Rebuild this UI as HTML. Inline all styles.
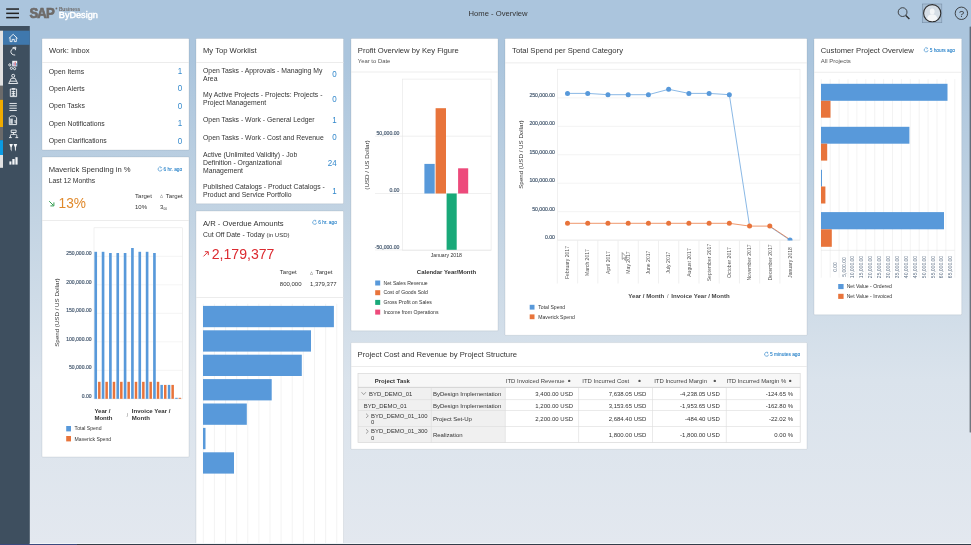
<!DOCTYPE html>
<html><head><meta charset="utf-8"><title>Home - Overview</title>
<style>
*{margin:0;padding:0}
html,body{width:971px;height:545px;overflow:hidden}
body{font-family:"Liberation Sans",sans-serif;background:linear-gradient(to bottom,#abc5dd 0px,#abc5dd 60px,#c3d4e3 220px,#dae3ec 380px,#e3e8ef 545px)}
svg{position:absolute;left:0;top:0;will-change:transform;font-family:"Liberation Sans",sans-serif}
</style></head><body>
<svg width="971" height="545" viewBox="0 0 971 545">
<rect x="6.20" y="8.30" width="12.80" height="1.50" fill="#222"/>
<rect x="6.20" y="12.60" width="12.80" height="1.50" fill="#222"/>
<rect x="6.20" y="16.85" width="12.80" height="1.50" fill="#222"/>
<text x="0" y="0" font-size="14.6" font-weight="bold" fill="#6e6b69" stroke="#6e6b69" stroke-width="0.75" transform="translate(29.4,18.1) scale(0.9,1)" letter-spacing="-0.9">SAP</text>
<circle cx="56.4" cy="8.5" r="0.9" fill="#6e6b69"/>
<text x="58.90" y="10.90" font-size="4.9" fill="#6e6b69" font-weight="bold" letter-spacing="-0.05">Business</text>
<text x="58.80" y="18.20" font-size="9.15" fill="#ffffff" stroke="#fff" stroke-width="0.42">ByDesign</text>
<text x="468.60" y="16.10" font-size="7.65" fill="#333">Home - Overview</text>
<rect x="0.00" y="26.00" width="29.80" height="519.00" fill="#3e4f5f"/>
<rect x="3.00" y="30.70" width="26.80" height="14.10" fill="#3f78ad"/>
<rect x="0.00" y="30.70" width="3.00" height="55.10" fill="#e2e2e2"/>
<rect x="0.00" y="85.80" width="3.00" height="14.00" fill="#6b6b6b"/>
<rect x="0.00" y="99.80" width="3.00" height="27.20" fill="#f0ab00"/>
<rect x="0.00" y="127.00" width="3.00" height="13.20" fill="#6b6b6b"/>
<rect x="0.00" y="140.20" width="3.00" height="14.80" fill="#0b9be3"/>
<rect x="0.00" y="155.00" width="3.00" height="12.80" fill="#e2e2e2"/>
<rect x="969.60" y="26.50" width="1.40" height="406.00" fill="rgba(45,52,62,0.62)" rx="0.5"/>
<rect x="42.00" y="38.50" width="147.00" height="111.50" fill="#fff" rx="0.7" stroke="rgba(60,80,100,0.14)" stroke-width="0.8"/>
<rect x="42.00" y="157.00" width="147.00" height="300.00" fill="#fff" rx="0.7" stroke="rgba(60,80,100,0.14)" stroke-width="0.8"/>
<rect x="196.00" y="38.50" width="147.50" height="165.20" fill="#fff" rx="0.7" stroke="rgba(60,80,100,0.14)" stroke-width="0.8"/>
<rect x="196.00" y="211.00" width="147.50" height="340.00" fill="#fff" rx="0.7" stroke="rgba(60,80,100,0.14)" stroke-width="0.8"/>
<rect x="351.00" y="38.50" width="147.00" height="292.30" fill="#fff" rx="0.7" stroke="rgba(60,80,100,0.14)" stroke-width="0.8"/>
<rect x="505.00" y="38.50" width="302.00" height="296.80" fill="#fff" rx="0.7" stroke="rgba(60,80,100,0.14)" stroke-width="0.8"/>
<rect x="814.00" y="38.50" width="147.70" height="276.30" fill="#fff" rx="0.7" stroke="rgba(60,80,100,0.14)" stroke-width="0.8"/>
<rect x="351.00" y="342.60" width="456.00" height="106.70" fill="#fff" rx="0.7" stroke="rgba(60,80,100,0.14)" stroke-width="0.8"/>
<text x="49.00" y="53.30" font-size="7.65" fill="#333">Work: Inbox</text>
<rect x="42.00" y="62.00" width="147.00" height="0.80" fill="#e8e8e8"/>
<text x="48.80" y="73.50" font-size="6.85" fill="#333">Open Items</text>
<text x="0" y="0" font-size="8.0" fill="#3489cc" text-anchor="end" transform="translate(182.20,73.90) scale(1,1.22)">1</text>
<text x="48.80" y="91.00" font-size="6.85" fill="#333">Open Alerts</text>
<text x="0" y="0" font-size="8.0" fill="#3489cc" text-anchor="end" transform="translate(182.20,91.40) scale(1,1.22)">0</text>
<text x="48.80" y="108.40" font-size="6.85" fill="#333">Open Tasks</text>
<text x="0" y="0" font-size="8.0" fill="#3489cc" text-anchor="end" transform="translate(182.20,108.80) scale(1,1.22)">0</text>
<text x="48.80" y="125.80" font-size="6.85" fill="#333">Open Notifications</text>
<text x="0" y="0" font-size="8.0" fill="#3489cc" text-anchor="end" transform="translate(182.20,126.20) scale(1,1.22)">1</text>
<text x="48.80" y="143.20" font-size="6.85" fill="#333">Open Clarifications</text>
<text x="0" y="0" font-size="8.0" fill="#3489cc" text-anchor="end" transform="translate(182.20,143.60) scale(1,1.22)">0</text>
<text x="48.70" y="172.00" font-size="7.65" fill="#333">Maverick Spending in %</text>
<text x="48.70" y="183.00" font-size="6.8" fill="#333">Last 12 Months</text>
<text x="182.20" y="170.93" font-size="4.8" fill="#3489cc" text-anchor="end" stroke="#3489cc" stroke-width="0.12">6 hr. ago</text>
<path d="M161.22,167.45 A2,2 0 1 0 162.02,169.40" fill="none" stroke="#3489cc" stroke-width="0.65"/>
<path d="M160.52,166.70 L161.62,167.60 L160.62,168.50" fill="none" stroke="#3489cc" stroke-width="0.5"/>
<path d="M49.2,201.2 L53.4,205.4 M53.9,202.4 L53.9,205.9 L50.4,205.9" stroke="#2b9a4a" stroke-width="0.95" fill="none"/>
<text x="0" y="0" font-size="13.7" fill="#e0892b" text-anchor="start" transform="translate(58.60,207.90) scale(1,1.12)">13%</text>
<text x="135.00" y="197.80" font-size="6.1" fill="#333">Target</text>
<text x="159.80" y="197.30" font-size="3.6" fill="#333">△</text>
<text x="165.80" y="197.80" font-size="6.1" fill="#333">Target</text>
<text x="135.00" y="209.10" font-size="6.0" fill="#333">10%</text>
<text x="160.00" y="209.10" font-size="6.0" fill="#333">3</text>
<text x="163.40" y="209.80" font-size="3.2" fill="#333">00</text>
<rect x="42.00" y="220.00" width="147.00" height="0.80" fill="#e8e8e8"/>
<rect x="94.00" y="227.80" width="88.40" height="171.00" fill="none" stroke="#e6e6e6" stroke-width="0.6"/>
<line x1="94.00" y1="398.80" x2="182.40" y2="398.80" stroke="#ececec" stroke-width="0.6"/>
<line x1="94.00" y1="370.30" x2="182.40" y2="370.30" stroke="#ececec" stroke-width="0.6"/>
<line x1="94.00" y1="341.80" x2="182.40" y2="341.80" stroke="#ececec" stroke-width="0.6"/>
<line x1="94.00" y1="313.30" x2="182.40" y2="313.30" stroke="#ececec" stroke-width="0.6"/>
<line x1="94.00" y1="284.80" x2="182.40" y2="284.80" stroke="#ececec" stroke-width="0.6"/>
<line x1="94.00" y1="256.30" x2="182.40" y2="256.30" stroke="#ececec" stroke-width="0.6"/>
<text x="91.50" y="397.64" font-size="5.05" fill="#44586f" text-anchor="end" stroke="#44586f" stroke-width="0.18">0.00</text>
<text x="91.50" y="369.14" font-size="5.05" fill="#44586f" text-anchor="end" stroke="#44586f" stroke-width="0.18">50,000.00</text>
<text x="91.50" y="340.64" font-size="5.05" fill="#44586f" text-anchor="end" stroke="#44586f" stroke-width="0.18">100,000.00</text>
<text x="91.50" y="312.14" font-size="5.05" fill="#44586f" text-anchor="end" stroke="#44586f" stroke-width="0.18">150,000.00</text>
<text x="91.50" y="283.64" font-size="5.05" fill="#44586f" text-anchor="end" stroke="#44586f" stroke-width="0.18">200,000.00</text>
<text x="91.50" y="255.14" font-size="5.05" fill="#44586f" text-anchor="end" stroke="#44586f" stroke-width="0.18">250,000.00</text>
<text x="0" y="0" font-size="6.2" fill="#333" text-anchor="middle" transform="translate(56.40,312.60) rotate(-90) translate(0,2.13)">Spend (USD / US Dollar)</text>
<rect x="94.40" y="251.80" width="2.65" height="147.00" fill="#5899da"/>
<rect x="98.05" y="381.80" width="2.50" height="17.00" fill="#e8743b"/>
<rect x="101.74" y="251.80" width="2.65" height="147.00" fill="#5899da"/>
<rect x="105.39" y="381.80" width="2.50" height="17.00" fill="#e8743b"/>
<rect x="109.08" y="253.00" width="2.65" height="145.80" fill="#5899da"/>
<rect x="112.73" y="381.80" width="2.50" height="17.00" fill="#e8743b"/>
<rect x="116.42" y="253.00" width="2.65" height="145.80" fill="#5899da"/>
<rect x="120.07" y="381.80" width="2.50" height="17.00" fill="#e8743b"/>
<rect x="123.76" y="253.00" width="2.65" height="145.80" fill="#5899da"/>
<rect x="127.41" y="381.80" width="2.50" height="17.00" fill="#e8743b"/>
<rect x="131.10" y="248.00" width="2.65" height="150.80" fill="#5899da"/>
<rect x="134.75" y="381.80" width="2.50" height="17.00" fill="#e8743b"/>
<rect x="138.44" y="251.80" width="2.65" height="147.00" fill="#5899da"/>
<rect x="142.09" y="381.80" width="2.50" height="17.00" fill="#e8743b"/>
<rect x="145.78" y="251.80" width="2.65" height="147.00" fill="#5899da"/>
<rect x="149.43" y="381.80" width="2.50" height="17.00" fill="#e8743b"/>
<rect x="153.12" y="253.00" width="2.65" height="145.80" fill="#5899da"/>
<rect x="156.77" y="381.80" width="2.50" height="17.00" fill="#e8743b"/>
<rect x="160.40" y="384.90" width="2.50" height="13.90" fill="#5899da"/>
<rect x="164.00" y="384.90" width="2.50" height="13.90" fill="#e8743b"/>
<rect x="167.80" y="384.90" width="2.50" height="13.90" fill="#5899da"/>
<rect x="171.40" y="384.90" width="2.50" height="13.90" fill="#e8743b"/>
<rect x="175.20" y="397.80" width="2.50" height="1.00" fill="#5899da"/>
<rect x="178.60" y="397.80" width="2.50" height="1.00" fill="#e8743b"/>
<text x="94.40" y="412.70" font-size="6.05" fill="#333" font-weight="bold">Year /</text>
<text x="94.40" y="419.50" font-size="6.05" fill="#333" font-weight="bold">Month</text>
<text x="126.80" y="417.00" font-size="4.5" fill="#555">/</text>
<text x="131.80" y="412.70" font-size="6.05" fill="#333" font-weight="bold">Invoice Year /</text>
<text x="131.80" y="419.50" font-size="6.05" fill="#333" font-weight="bold">Month</text>
<rect x="66.20" y="426.00" width="4.80" height="5.40" fill="#5899da"/>
<text x="74.60" y="430.45" font-size="5.1" fill="#333">Total Spend</text>
<rect x="66.20" y="436.00" width="4.80" height="5.40" fill="#e8743b"/>
<text x="74.60" y="440.65" font-size="5.1" fill="#333">Maverick Spend</text>
<text x="203.00" y="53.30" font-size="7.65" fill="#333">My Top Worklist</text>
<rect x="196.00" y="62.00" width="147.50" height="0.80" fill="#e8e8e8"/>
<text x="203.00" y="72.70" font-size="6.85" fill="#333">Open Tasks - Approvals - Managing My</text>
<text x="203.00" y="80.55" font-size="6.85" fill="#333">Area</text>
<text x="0" y="0" font-size="8.0" fill="#3489cc" text-anchor="end" transform="translate(336.60,77.45) scale(1,1.22)">0</text>
<text x="203.00" y="97.40" font-size="6.85" fill="#333">My Active Projects - Projects: Projects -</text>
<text x="203.00" y="105.25" font-size="6.85" fill="#333">Project Management</text>
<text x="0" y="0" font-size="8.0" fill="#3489cc" text-anchor="end" transform="translate(336.60,101.65) scale(1,1.22)">0</text>
<text x="203.00" y="122.10" font-size="6.85" fill="#333">Open Tasks - Work - General Ledger</text>
<text x="0" y="0" font-size="8.0" fill="#3489cc" text-anchor="end" transform="translate(336.60,122.85) scale(1,1.22)">1</text>
<text x="203.00" y="139.90" font-size="6.85" fill="#333">Open Tasks - Work - Cost and Revenue</text>
<text x="0" y="0" font-size="8.0" fill="#3489cc" text-anchor="end" transform="translate(336.60,140.45) scale(1,1.22)">0</text>
<text x="203.00" y="157.00" font-size="6.85" fill="#333">Active (Unlimited Validity) - Job</text>
<text x="203.00" y="164.85" font-size="6.85" fill="#333">Definition - Organizational</text>
<text x="203.00" y="172.70" font-size="6.85" fill="#333">Management</text>
<text x="0" y="0" font-size="8.0" fill="#3489cc" text-anchor="end" transform="translate(336.60,165.95) scale(1,1.22)">24</text>
<text x="203.00" y="189.30" font-size="6.85" fill="#333">Published Catalogs - Product Catalogs -</text>
<text x="203.00" y="197.15" font-size="6.85" fill="#333">Product and Service Portfolio</text>
<text x="0" y="0" font-size="8.0" fill="#3489cc" text-anchor="end" transform="translate(336.60,194.05) scale(1,1.22)">1</text>
<text x="203.00" y="225.60" font-size="7.65" fill="#333">A/R - Overdue Amounts</text>
<text x="336.80" y="224.23" font-size="4.8" fill="#3489cc" text-anchor="end" stroke="#3489cc" stroke-width="0.12">6 hr. ago</text>
<path d="M315.82,220.75 A2,2 0 1 0 316.62,222.70" fill="none" stroke="#3489cc" stroke-width="0.65"/>
<path d="M315.12,220.00 L316.22,220.90 L315.22,221.80" fill="none" stroke="#3489cc" stroke-width="0.5"/>
<text x="203.00" y="237.20" font-size="6.8" fill="#333">Cut Off Date - Today</text>
<text x="266.50" y="237.20" font-size="6.0" fill="#333">(in USD)</text>
<path d="M203.5,256.4 L207.9,252 M204.9,251.7 L208.3,251.7 L208.3,255.1" stroke="#dc2a30" stroke-width="0.95" fill="none"/>
<text x="0" y="0" font-size="14.1" fill="#dc2a30" text-anchor="start" transform="translate(211.70,258.50) scale(1,1.07)">2,179,377</text>
<text x="279.80" y="274.20" font-size="6.1" fill="#333">Target</text>
<text x="310.30" y="273.70" font-size="3.6" fill="#333">△</text>
<text x="315.60" y="274.20" font-size="6.1" fill="#333">Target</text>
<text x="279.80" y="286.00" font-size="6.0" fill="#333">800,000</text>
<text x="336.60" y="286.00" font-size="6.0" fill="#333" text-anchor="end">1,379,377</text>
<rect x="196.00" y="297.00" width="147.50" height="0.80" fill="#e8e8e8"/>
<line x1="203.30" y1="303.80" x2="203.30" y2="545.00" stroke="#ebebeb" stroke-width="0.6"/>
<line x1="214.42" y1="303.80" x2="214.42" y2="545.00" stroke="#ebebeb" stroke-width="0.6"/>
<line x1="225.54" y1="303.80" x2="225.54" y2="545.00" stroke="#ebebeb" stroke-width="0.6"/>
<line x1="236.66" y1="303.80" x2="236.66" y2="545.00" stroke="#ebebeb" stroke-width="0.6"/>
<line x1="247.78" y1="303.80" x2="247.78" y2="545.00" stroke="#ebebeb" stroke-width="0.6"/>
<line x1="258.90" y1="303.80" x2="258.90" y2="545.00" stroke="#ebebeb" stroke-width="0.6"/>
<line x1="270.02" y1="303.80" x2="270.02" y2="545.00" stroke="#ebebeb" stroke-width="0.6"/>
<line x1="281.14" y1="303.80" x2="281.14" y2="545.00" stroke="#ebebeb" stroke-width="0.6"/>
<line x1="292.26" y1="303.80" x2="292.26" y2="545.00" stroke="#ebebeb" stroke-width="0.6"/>
<line x1="303.38" y1="303.80" x2="303.38" y2="545.00" stroke="#ebebeb" stroke-width="0.6"/>
<line x1="314.50" y1="303.80" x2="314.50" y2="545.00" stroke="#ebebeb" stroke-width="0.6"/>
<line x1="325.62" y1="303.80" x2="325.62" y2="545.00" stroke="#ebebeb" stroke-width="0.6"/>
<line x1="336.74" y1="303.80" x2="336.74" y2="545.00" stroke="#ebebeb" stroke-width="0.6"/>
<rect x="203.00" y="305.90" width="130.90" height="21.30" fill="#5899da"/>
<rect x="203.00" y="330.30" width="108.00" height="21.30" fill="#5899da"/>
<rect x="203.00" y="354.70" width="98.80" height="21.30" fill="#5899da"/>
<rect x="203.00" y="379.10" width="68.70" height="21.30" fill="#5899da"/>
<rect x="203.00" y="403.50" width="43.80" height="21.30" fill="#5899da"/>
<rect x="203.00" y="427.90" width="2.50" height="21.30" fill="#5899da"/>
<rect x="203.00" y="452.30" width="31.00" height="21.30" fill="#5899da"/>
<text x="357.80" y="52.60" font-size="7.65" fill="#333">Profit Overview by Key Figure</text>
<text x="357.80" y="63.40" font-size="5.9" fill="#555">Year to Date</text>
<rect x="351.00" y="71.60" width="147.00" height="0.80" fill="#e8e8e8"/>
<rect x="402.40" y="79.10" width="88.70" height="171.20" fill="none" stroke="#e6e6e6" stroke-width="0.6"/>
<line x1="375.00" y1="136.20" x2="491.10" y2="136.20" stroke="#e6e6e6" stroke-width="0.6"/>
<line x1="375.00" y1="193.50" x2="491.10" y2="193.50" stroke="#e6e6e6" stroke-width="0.6"/>
<line x1="375.00" y1="250.00" x2="491.10" y2="250.00" stroke="#e6e6e6" stroke-width="0.6"/>
<text x="399.40" y="134.77" font-size="5.15" fill="#44586f" text-anchor="end" stroke="#44586f" stroke-width="0.18">50,000.00</text>
<text x="399.40" y="191.97" font-size="5.15" fill="#44586f" text-anchor="end" stroke="#44586f" stroke-width="0.18">0.00</text>
<text x="399.40" y="248.97" font-size="5.15" fill="#44586f" text-anchor="end" stroke="#44586f" stroke-width="0.18">-50,000.00</text>
<text x="0" y="0" font-size="6.25" fill="#333" text-anchor="middle" transform="translate(366.40,165.00) rotate(-90) translate(0,2.15)">(USD / US Dollar)</text>
<rect x="424.40" y="163.90" width="10.30" height="29.60" fill="#5899da"/>
<rect x="435.60" y="108.20" width="10.40" height="85.30" fill="#e8743b"/>
<rect x="446.60" y="193.50" width="10.10" height="56.30" fill="#19a979"/>
<rect x="458.10" y="168.30" width="10.10" height="25.20" fill="#ed4a7b"/>
<text x="446.30" y="257.27" font-size="5.15" fill="#333" text-anchor="middle">January 2018</text>
<text x="446.50" y="273.95" font-size="5.97" fill="#333" font-weight="bold" text-anchor="middle">Calendar Year/Month</text>
<rect x="375.20" y="280.50" width="5.00" height="5.00" fill="#5899da"/>
<text x="383.50" y="284.77" font-size="5.14" fill="#333">Net Sales Revenue</text>
<rect x="375.20" y="290.20" width="5.00" height="5.00" fill="#e8743b"/>
<text x="383.50" y="294.47" font-size="5.14" fill="#333">Cost of Goods Sold</text>
<rect x="375.20" y="299.90" width="5.00" height="5.00" fill="#19a979"/>
<text x="383.50" y="304.17" font-size="5.14" fill="#333">Gross Profit on Sales</text>
<rect x="375.20" y="309.60" width="5.00" height="5.00" fill="#ed4a7b"/>
<text x="383.50" y="313.87" font-size="5.14" fill="#333">Income from Operations</text>
<text x="512.10" y="52.60" font-size="7.65" fill="#333">Total Spend per Spend Category</text>
<rect x="505.00" y="62.50" width="302.00" height="0.80" fill="#e8e8e8"/>
<rect x="557.30" y="69.20" width="242.70" height="170.90" fill="none" stroke="#e6e6e6" stroke-width="0.6"/>
<line x1="557.30" y1="240.10" x2="800.00" y2="240.10" stroke="#ebebeb" stroke-width="0.6"/>
<text x="554.90" y="239.25" font-size="5.1" fill="#44586f" text-anchor="end" stroke="#44586f" stroke-width="0.18">0.00</text>
<line x1="557.30" y1="211.66" x2="800.00" y2="211.66" stroke="#ebebeb" stroke-width="0.6"/>
<text x="554.90" y="210.81" font-size="5.1" fill="#44586f" text-anchor="end" stroke="#44586f" stroke-width="0.18">50,000.00</text>
<line x1="557.30" y1="183.22" x2="800.00" y2="183.22" stroke="#ebebeb" stroke-width="0.6"/>
<text x="554.90" y="182.37" font-size="5.1" fill="#44586f" text-anchor="end" stroke="#44586f" stroke-width="0.18">100,000.00</text>
<line x1="557.30" y1="154.78" x2="800.00" y2="154.78" stroke="#ebebeb" stroke-width="0.6"/>
<text x="554.90" y="153.93" font-size="5.1" fill="#44586f" text-anchor="end" stroke="#44586f" stroke-width="0.18">150,000.00</text>
<line x1="557.30" y1="126.34" x2="800.00" y2="126.34" stroke="#ebebeb" stroke-width="0.6"/>
<text x="554.90" y="125.49" font-size="5.1" fill="#44586f" text-anchor="end" stroke="#44586f" stroke-width="0.18">200,000.00</text>
<line x1="557.30" y1="97.90" x2="800.00" y2="97.90" stroke="#ebebeb" stroke-width="0.6"/>
<text x="554.90" y="97.05" font-size="5.1" fill="#44586f" text-anchor="end" stroke="#44586f" stroke-width="0.18">250,000.00</text>
<text x="0" y="0" font-size="6.2" fill="#333" text-anchor="middle" transform="translate(520.50,154.60) rotate(-90) translate(0,2.13)">Spend (USD / US Dollar)</text>
<polyline points="567.50,93.40 587.73,93.40 607.96,94.70 628.19,94.70 648.42,94.70 668.65,89.30 688.88,93.40 709.11,93.40 729.34,94.70 749.57,226.10" fill="none" stroke="#5899da" stroke-width="0.7"/>
<line x1="769.80" y1="226.6" x2="790.03" y2="240.1" stroke="#5899da" stroke-width="0.7"/>
<polyline points="567.50,223.30 587.73,223.30 607.96,223.30 628.19,223.30 648.42,223.30 668.65,223.30 688.88,223.30 709.11,223.30 729.34,223.30 749.57,226.10 769.80,226.10 790.03,239.60" fill="none" stroke="#e8743b" stroke-width="0.75"/>
<circle cx="567.50" cy="93.40" r="2.5" fill="#5899da"/>
<circle cx="587.73" cy="93.40" r="2.5" fill="#5899da"/>
<circle cx="607.96" cy="94.70" r="2.5" fill="#5899da"/>
<circle cx="628.19" cy="94.70" r="2.5" fill="#5899da"/>
<circle cx="648.42" cy="94.70" r="2.5" fill="#5899da"/>
<circle cx="668.65" cy="89.30" r="2.5" fill="#5899da"/>
<circle cx="688.88" cy="93.40" r="2.5" fill="#5899da"/>
<circle cx="709.11" cy="93.40" r="2.5" fill="#5899da"/>
<circle cx="729.34" cy="94.70" r="2.5" fill="#5899da"/>
<circle cx="567.50" cy="223.30" r="2.5" fill="#e8743b"/>
<circle cx="587.73" cy="223.30" r="2.5" fill="#e8743b"/>
<circle cx="607.96" cy="223.30" r="2.5" fill="#e8743b"/>
<circle cx="628.19" cy="223.30" r="2.5" fill="#e8743b"/>
<circle cx="648.42" cy="223.30" r="2.5" fill="#e8743b"/>
<circle cx="668.65" cy="223.30" r="2.5" fill="#e8743b"/>
<circle cx="688.88" cy="223.30" r="2.5" fill="#e8743b"/>
<circle cx="709.11" cy="223.30" r="2.5" fill="#e8743b"/>
<circle cx="729.34" cy="223.30" r="2.5" fill="#e8743b"/>
<circle cx="749.57" cy="226.10" r="2.5" fill="#e8743b"/>
<circle cx="769.80" cy="226.10" r="2.5" fill="#e8743b"/>
<clipPath id="pc6"><rect x="557" y="60" width="250" height="180.4"/></clipPath>
<circle cx="790.03" cy="240.10" r="2.5" fill="#5899da" clip-path="url(#pc6)"/>
<text x="0" y="0" font-size="5.08" fill="#555" text-anchor="middle" transform="translate(567.50,262.50) rotate(-90) translate(0,1.75)">February 2017</text>
<text x="0" y="0" font-size="5.08" fill="#555" text-anchor="middle" transform="translate(587.73,262.50) rotate(-90) translate(0,1.75)">March 2017</text>
<line x1="577.62" y1="240.70" x2="577.62" y2="283.50" stroke="#e6e6e6" stroke-width="0.6"/>
<text x="0" y="0" font-size="5.08" fill="#555" text-anchor="middle" transform="translate(607.96,262.50) rotate(-90) translate(0,1.75)">April 2017</text>
<line x1="597.85" y1="240.70" x2="597.85" y2="283.50" stroke="#e6e6e6" stroke-width="0.6"/>
<text x="0" y="0" font-size="5.08" fill="#555" text-anchor="middle" transform="translate(628.19,262.50) rotate(-90) translate(0,1.75)">May 2017</text>
<line x1="618.08" y1="240.70" x2="618.08" y2="283.50" stroke="#e6e6e6" stroke-width="0.6"/>
<text x="0" y="0" font-size="5.08" fill="#555" text-anchor="middle" transform="translate(648.42,262.50) rotate(-90) translate(0,1.75)">June 2017</text>
<line x1="638.31" y1="240.70" x2="638.31" y2="283.50" stroke="#e6e6e6" stroke-width="0.6"/>
<text x="0" y="0" font-size="5.08" fill="#555" text-anchor="middle" transform="translate(668.65,262.50) rotate(-90) translate(0,1.75)">July 2017</text>
<line x1="658.53" y1="240.70" x2="658.53" y2="283.50" stroke="#e6e6e6" stroke-width="0.6"/>
<text x="0" y="0" font-size="5.08" fill="#555" text-anchor="middle" transform="translate(688.88,262.50) rotate(-90) translate(0,1.75)">August 2017</text>
<line x1="678.76" y1="240.70" x2="678.76" y2="283.50" stroke="#e6e6e6" stroke-width="0.6"/>
<text x="0" y="0" font-size="5.08" fill="#555" text-anchor="middle" transform="translate(709.11,262.50) rotate(-90) translate(0,1.75)">September 2017</text>
<line x1="699.00" y1="240.70" x2="699.00" y2="283.50" stroke="#e6e6e6" stroke-width="0.6"/>
<text x="0" y="0" font-size="5.08" fill="#555" text-anchor="middle" transform="translate(729.34,262.50) rotate(-90) translate(0,1.75)">October 2017</text>
<line x1="719.23" y1="240.70" x2="719.23" y2="283.50" stroke="#e6e6e6" stroke-width="0.6"/>
<text x="0" y="0" font-size="5.08" fill="#555" text-anchor="middle" transform="translate(749.57,262.50) rotate(-90) translate(0,1.75)">November 2017</text>
<line x1="739.45" y1="240.70" x2="739.45" y2="283.50" stroke="#e6e6e6" stroke-width="0.6"/>
<text x="0" y="0" font-size="5.08" fill="#555" text-anchor="middle" transform="translate(769.80,262.50) rotate(-90) translate(0,1.75)">December 2017</text>
<line x1="759.68" y1="240.70" x2="759.68" y2="283.50" stroke="#e6e6e6" stroke-width="0.6"/>
<text x="0" y="0" font-size="5.08" fill="#555" text-anchor="middle" transform="translate(790.03,262.50) rotate(-90) translate(0,1.75)">January 2018</text>
<line x1="779.91" y1="240.70" x2="779.91" y2="283.50" stroke="#e6e6e6" stroke-width="0.6"/>
<line x1="557.30" y1="240.40" x2="557.30" y2="283.50" stroke="#e6e6e6" stroke-width="0.6"/>
<text x="679" y="298.08" font-size="6.06" fill="#444" text-anchor="middle"><tspan font-weight="bold">Year / Month</tspan><tspan fill="#666" font-size="5.5"> / </tspan><tspan font-weight="bold">Invoice Year / Month</tspan></text>
<rect x="529.70" y="304.80" width="4.80" height="4.80" fill="#5899da"/>
<text x="538.30" y="308.95" font-size="5.1" fill="#333">Total Spend</text>
<rect x="529.70" y="314.40" width="4.80" height="4.80" fill="#e8743b"/>
<text x="538.30" y="318.55" font-size="5.1" fill="#333">Maverick Spend</text>
<path d="M622.2,252.6 L622.2,259.4 L623.8,257.9 L625,260.4 L626,259.9 L624.8,257.5 L626.8,257.4 Z" fill="#fff" stroke="#333" stroke-width="0.45"/>
<text x="820.80" y="52.60" font-size="7.65" fill="#333">Customer Project Overview</text>
<text x="955.00" y="51.73" font-size="4.8" fill="#3489cc" text-anchor="end" stroke="#3489cc" stroke-width="0.12">5 hours ago</text>
<path d="M927.35,48.25 A2,2 0 1 0 928.15,50.20" fill="none" stroke="#3489cc" stroke-width="0.65"/>
<path d="M926.65,47.50 L927.75,48.40 L926.75,49.30" fill="none" stroke="#3489cc" stroke-width="0.5"/>
<text x="820.80" y="63.40" font-size="6.0" fill="#555">All Projects</text>
<rect x="814.00" y="71.80" width="147.70" height="0.80" fill="#e8e8e8"/>
<line x1="821.30" y1="79.20" x2="821.30" y2="277.60" stroke="#ebebeb" stroke-width="0.6"/>
<line x1="830.20" y1="79.20" x2="830.20" y2="277.60" stroke="#ebebeb" stroke-width="0.6"/>
<line x1="839.10" y1="79.20" x2="839.10" y2="277.60" stroke="#ebebeb" stroke-width="0.6"/>
<line x1="848.00" y1="79.20" x2="848.00" y2="277.60" stroke="#ebebeb" stroke-width="0.6"/>
<line x1="856.90" y1="79.20" x2="856.90" y2="277.60" stroke="#ebebeb" stroke-width="0.6"/>
<line x1="865.80" y1="79.20" x2="865.80" y2="277.60" stroke="#ebebeb" stroke-width="0.6"/>
<line x1="874.70" y1="79.20" x2="874.70" y2="277.60" stroke="#ebebeb" stroke-width="0.6"/>
<line x1="883.60" y1="79.20" x2="883.60" y2="277.60" stroke="#ebebeb" stroke-width="0.6"/>
<line x1="892.50" y1="79.20" x2="892.50" y2="277.60" stroke="#ebebeb" stroke-width="0.6"/>
<line x1="901.40" y1="79.20" x2="901.40" y2="277.60" stroke="#ebebeb" stroke-width="0.6"/>
<line x1="910.30" y1="79.20" x2="910.30" y2="277.60" stroke="#ebebeb" stroke-width="0.6"/>
<line x1="919.20" y1="79.20" x2="919.20" y2="277.60" stroke="#ebebeb" stroke-width="0.6"/>
<line x1="928.10" y1="79.20" x2="928.10" y2="277.60" stroke="#ebebeb" stroke-width="0.6"/>
<line x1="937.00" y1="79.20" x2="937.00" y2="277.60" stroke="#ebebeb" stroke-width="0.6"/>
<line x1="945.90" y1="79.20" x2="945.90" y2="277.60" stroke="#ebebeb" stroke-width="0.6"/>
<line x1="954.80" y1="79.20" x2="954.80" y2="277.60" stroke="#ebebeb" stroke-width="0.6"/>
<rect x="821.00" y="83.80" width="126.50" height="17.00" fill="#5899da"/>
<rect x="821.00" y="100.80" width="9.50" height="16.90" fill="#e8743b"/>
<rect x="821.00" y="126.80" width="88.40" height="16.90" fill="#5899da"/>
<rect x="821.00" y="143.70" width="6.20" height="16.90" fill="#e8743b"/>
<rect x="821.00" y="169.80" width="1.00" height="16.90" fill="#5899da"/>
<rect x="821.00" y="186.50" width="4.40" height="17.00" fill="#e8743b"/>
<rect x="821.00" y="212.10" width="123.00" height="17.20" fill="#5899da"/>
<rect x="821.00" y="229.30" width="10.80" height="17.50" fill="#e8743b"/>
<line x1="821.00" y1="250.30" x2="954.50" y2="250.30" stroke="#e0e0e0" stroke-width="0.6"/>
<text x="0" y="0" font-size="5.0" fill="#5f7186" text-anchor="middle" transform="translate(834.90,267.00) rotate(-90) translate(0,1.72)">0.00</text>
<text x="0" y="0" font-size="5.0" fill="#5f7186" text-anchor="middle" transform="translate(843.80,267.00) rotate(-90) translate(0,1.72)">5,000.00</text>
<text x="0" y="0" font-size="5.0" fill="#5f7186" text-anchor="middle" transform="translate(852.70,267.00) rotate(-90) translate(0,1.72)">10,000.00</text>
<text x="0" y="0" font-size="5.0" fill="#5f7186" text-anchor="middle" transform="translate(861.60,267.00) rotate(-90) translate(0,1.72)">15,000.00</text>
<text x="0" y="0" font-size="5.0" fill="#5f7186" text-anchor="middle" transform="translate(870.50,267.00) rotate(-90) translate(0,1.72)">20,000.00</text>
<text x="0" y="0" font-size="5.0" fill="#5f7186" text-anchor="middle" transform="translate(879.40,267.00) rotate(-90) translate(0,1.72)">25,000.00</text>
<text x="0" y="0" font-size="5.0" fill="#5f7186" text-anchor="middle" transform="translate(888.30,267.00) rotate(-90) translate(0,1.72)">30,000.00</text>
<text x="0" y="0" font-size="5.0" fill="#5f7186" text-anchor="middle" transform="translate(897.20,267.00) rotate(-90) translate(0,1.72)">35,000.00</text>
<text x="0" y="0" font-size="5.0" fill="#5f7186" text-anchor="middle" transform="translate(906.10,267.00) rotate(-90) translate(0,1.72)">40,000.00</text>
<text x="0" y="0" font-size="5.0" fill="#5f7186" text-anchor="middle" transform="translate(915.00,267.00) rotate(-90) translate(0,1.72)">45,000.00</text>
<text x="0" y="0" font-size="5.0" fill="#5f7186" text-anchor="middle" transform="translate(923.90,267.00) rotate(-90) translate(0,1.72)">50,000.00</text>
<text x="0" y="0" font-size="5.0" fill="#5f7186" text-anchor="middle" transform="translate(932.80,267.00) rotate(-90) translate(0,1.72)">55,000.00</text>
<text x="0" y="0" font-size="5.0" fill="#5f7186" text-anchor="middle" transform="translate(941.70,267.00) rotate(-90) translate(0,1.72)">60,000.00</text>
<text x="0" y="0" font-size="5.0" fill="#5f7186" text-anchor="middle" transform="translate(950.60,267.00) rotate(-90) translate(0,1.72)">65,000.00</text>
<rect x="838.20" y="284.00" width="5.40" height="5.10" fill="#5899da"/>
<text x="846.70" y="288.35" font-size="5.1" fill="#333">Net Value - Ordered</text>
<rect x="838.20" y="293.80" width="5.40" height="5.10" fill="#e8743b"/>
<text x="846.70" y="298.05" font-size="5.1" fill="#333">Net Value - Invoiced</text>
<text x="357.60" y="357.30" font-size="7.7" fill="#333">Project Cost and Revenue by Project Structure</text>
<text x="800.20" y="356.13" font-size="4.8" fill="#3489cc" text-anchor="end" stroke="#3489cc" stroke-width="0.12">5 minutes ago</text>
<path d="M767.75,352.65 A2,2 0 1 0 768.55,354.60" fill="none" stroke="#3489cc" stroke-width="0.65"/>
<path d="M767.05,351.90 L768.15,352.80 L767.15,353.70" fill="none" stroke="#3489cc" stroke-width="0.5"/>
<rect x="351.00" y="366.20" width="456.00" height="0.80" fill="#e8e8e8"/>
<rect x="358.00" y="373.40" width="442.20" height="14.00" fill="#f7f7f7"/>
<rect x="358.00" y="387.40" width="147.30" height="55.10" fill="#f0f0f0"/>
<rect x="358.00" y="373.40" width="442.20" height="69.10" fill="none" stroke="#d8d8d8" stroke-width="0.7"/>
<line x1="358.00" y1="387.40" x2="800.20" y2="387.40" stroke="#cfcfcf" stroke-width="0.9"/>
<line x1="358.00" y1="399.60" x2="800.20" y2="399.60" stroke="#dcdcdc" stroke-width="0.6"/>
<line x1="358.00" y1="410.50" x2="800.20" y2="410.50" stroke="#dcdcdc" stroke-width="0.6"/>
<line x1="358.00" y1="426.50" x2="800.20" y2="426.50" stroke="#dcdcdc" stroke-width="0.6"/>
<line x1="431.30" y1="387.40" x2="431.30" y2="442.50" stroke="#dcdcdc" stroke-width="0.6"/>
<line x1="505.30" y1="387.40" x2="505.30" y2="442.50" stroke="#dcdcdc" stroke-width="0.6"/>
<line x1="578.60" y1="387.40" x2="578.60" y2="442.50" stroke="#dcdcdc" stroke-width="0.6"/>
<line x1="652.50" y1="387.40" x2="652.50" y2="442.50" stroke="#dcdcdc" stroke-width="0.6"/>
<line x1="726.30" y1="387.40" x2="726.30" y2="442.50" stroke="#dcdcdc" stroke-width="0.6"/>
<text x="374.80" y="382.96" font-size="5.98" fill="#333" font-weight="bold">Project Task</text>
<text x="505.80" y="382.95" font-size="5.95" fill="#444">ITD Invoiced Revenue</text>
<circle cx="569.20" cy="380.9" r="1.2" fill="#555"/>
<text x="582.30" y="382.95" font-size="5.95" fill="#444">ITD Incurred Cost</text>
<circle cx="639.50" cy="380.9" r="1.2" fill="#555"/>
<text x="654.20" y="382.95" font-size="5.95" fill="#444">ITD Incurred Margin</text>
<circle cx="714.80" cy="380.9" r="1.2" fill="#555"/>
<text x="726.50" y="382.95" font-size="5.95" fill="#444">ITD Incurred Margin %</text>
<circle cx="790.20" cy="380.9" r="1.2" fill="#555"/>
<path d="M361.5,392.2 L363.7,394.6 L365.9,392.2" fill="none" stroke="#666" stroke-width="0.6"/>
<text x="369.00" y="395.55" font-size="5.95" fill="#333">BYD_DEMO_01</text>
<text x="432.90" y="396.26" font-size="6.0" fill="#333">ByDesign Implementation</text>
<text x="363.70" y="407.65" font-size="5.95" fill="#333">BYD_DEMO_01</text>
<text x="432.90" y="407.66" font-size="6.0" fill="#333">ByDesign Implementation</text>
<path d="M366,413.60 L368.3,415.80 L366,418.00" fill="none" stroke="#666" stroke-width="0.6"/>
<text x="371.10" y="417.85" font-size="5.95" fill="#333">BYD_DEMO_01_100</text>
<text x="371.10" y="424.25" font-size="5.95" fill="#333">0</text>
<text x="432.90" y="421.36" font-size="6.0" fill="#333">Project Set-Up</text>
<path d="M366,429.20 L368.3,431.40 L366,433.60" fill="none" stroke="#666" stroke-width="0.6"/>
<text x="371.10" y="433.45" font-size="5.95" fill="#333">BYD_DEMO_01_300</text>
<text x="371.10" y="439.85" font-size="5.95" fill="#333">0</text>
<text x="432.90" y="436.96" font-size="6.0" fill="#333">Realization</text>
<text x="573.00" y="396.06" font-size="6.0" fill="#333" text-anchor="end">3,400.00 USD</text>
<text x="646.40" y="396.06" font-size="6.0" fill="#333" text-anchor="end">7,638.05 USD</text>
<text x="719.80" y="396.06" font-size="6.0" fill="#333" text-anchor="end">-4,238.05 USD</text>
<text x="793.00" y="396.06" font-size="6.0" fill="#333" text-anchor="end">-124.65 %</text>
<text x="573.00" y="407.66" font-size="6.0" fill="#333" text-anchor="end">1,200.00 USD</text>
<text x="646.40" y="407.66" font-size="6.0" fill="#333" text-anchor="end">3,153.65 USD</text>
<text x="719.80" y="407.66" font-size="6.0" fill="#333" text-anchor="end">-1,953.65 USD</text>
<text x="793.00" y="407.66" font-size="6.0" fill="#333" text-anchor="end">-162.80 %</text>
<text x="573.00" y="421.36" font-size="6.0" fill="#333" text-anchor="end">2,200.00 USD</text>
<text x="646.40" y="421.36" font-size="6.0" fill="#333" text-anchor="end">2,684.40 USD</text>
<text x="719.80" y="421.36" font-size="6.0" fill="#333" text-anchor="end">-484.40 USD</text>
<text x="793.00" y="421.36" font-size="6.0" fill="#333" text-anchor="end">-22.02 %</text>
<text x="646.40" y="437.26" font-size="6.0" fill="#333" text-anchor="end">1,800.00 USD</text>
<text x="719.80" y="437.26" font-size="6.0" fill="#333" text-anchor="end">-1,800.00 USD</text>
<text x="793.00" y="437.26" font-size="6.0" fill="#333" text-anchor="end">0.00 %</text>
<circle cx="902.6" cy="12.1" r="4.4" fill="none" stroke="#2d2d2d" stroke-width="0.85"/>
<line x1="905.8" y1="15.4" x2="909.4" y2="18.9" stroke="#2d2d2d" stroke-width="1.4"/>
<rect x="922.30" y="4.00" width="19.50" height="18.70" fill="#a5bcd2" stroke="#7890a8" stroke-width="0.6"/>
<circle cx="932.2" cy="13.2" r="8.6" fill="#d6dee6" stroke="#2e2e2e" stroke-width="1.1"/>
<clipPath id="avc"><circle cx="932.2" cy="13.2" r="8.0"/></clipPath>
<g clip-path="url(#avc)" fill="#f4f6f8"><ellipse cx="932.2" cy="11.6" rx="2.4" ry="3"/><path d="M927.2,24 L927.4,17.6 Q928,15.2 930.6,14.6 L933.8,14.6 Q936.4,15.2 937,17.6 L937.2,24 Z"/></g>
<circle cx="961.4" cy="13.3" r="6.2" fill="none" stroke="#2d2d2d" stroke-width="0.85"/>
<text x="961.50" y="16.60" font-size="9.2" fill="#2d2d2d" text-anchor="middle">?</text>
<path d="M8.9,38.4 L13.2,34.3 L17.5,38.4 M10.1,37.4 L10.1,41.6 L12.1,41.6 L12.1,39.4 L14.3,39.4 L14.3,41.6 L16.3,41.6 L16.3,37.4" fill="none" stroke="#f4f6f8" stroke-width="0.9" stroke-linejoin="round"/>
<path d="M15.3,48.8 Q12,47.6 10.9,51.2 Q10.6,54.8 15.2,55.1" fill="none" stroke="#f4f6f8" stroke-width="0.9" stroke-linejoin="round" stroke-width="1.1"/>
<path d="M12.6,47.6 L15.8,47.2 L15.4,50.2" fill="none" stroke="#f4f6f8" stroke-width="0.9" stroke-linejoin="round"/>
<rect x="12.20" y="60.80" width="5.00" height="5.60" fill="#f4f6f8"/>
<rect x="13.60" y="62.60" width="0.80" height="3.00" fill="#7a4fb0"/>
<rect x="14.80" y="61.80" width="0.80" height="3.80" fill="#d04040"/>
<rect x="16.00" y="63.20" width="0.70" height="2.40" fill="#3080d0"/>
<circle cx="9.8" cy="64.9" r="1.1" fill="none" stroke="#f4f6f8" stroke-width="0.9" stroke-linejoin="round" stroke-width="0.7"/>
<circle cx="11.4" cy="68.3" r="1.1" fill="none" stroke="#f4f6f8" stroke-width="0.9" stroke-linejoin="round" stroke-width="0.7"/>
<circle cx="14.6" cy="68.6" r="1.1" fill="none" stroke="#f4f6f8" stroke-width="0.9" stroke-linejoin="round" stroke-width="0.7"/>
<circle cx="13.2" cy="75.8" r="1.5" fill="none" stroke="#f4f6f8" stroke-width="0.9" stroke-linejoin="round" stroke-width="0.8"/>
<path d="M11.3,78.3 L15.1,78.3 L17.7,83.5 L8.7,83.5 Z" fill="none" stroke="#f4f6f8" stroke-width="0.9" stroke-linejoin="round" stroke-width="0.9"/>
<path d="M10,81.2 L16.4,81.2" fill="none" stroke="#f4f6f8" stroke-width="0.9" stroke-linejoin="round" stroke-width="0.7"/>
<rect x="10.3" y="89" width="6.3" height="7.6" fill="none" stroke="#f4f6f8" stroke-width="0.9" stroke-linejoin="round" stroke-width="0.8"/>
<rect x="12.00" y="88.20" width="2.90" height="1.40" fill="#f4f6f8"/>
<path d="M11.6,91.6 L15.3,91.6 M11.6,93.4 L15.3,93.4 M11.6,95.2 L15.3,95.2 M13.4,90.6 L13.4,96" fill="none" stroke="#f4f6f8" stroke-width="0.9" stroke-linejoin="round" stroke-width="0.55"/>
<rect x="9.40" y="102.95" width="7.40" height="0.90" fill="#f4f6f8"/>
<rect x="9.40" y="105.35" width="7.40" height="0.90" fill="#f4f6f8"/>
<rect x="9.40" y="107.75" width="7.40" height="0.90" fill="#f4f6f8"/>
<rect x="9.40" y="110.05" width="7.40" height="0.90" fill="#f4f6f8"/>
<path d="M10.8,116 L14.8,116 L16.6,117.8 L16.6,124.6 L9.3,124.6 L9.3,117.6 Z" fill="none" stroke="#f4f6f8" stroke-width="0.9" stroke-linejoin="round" stroke-width="0.8"/>
<rect x="10.20" y="118.60" width="2.60" height="5.20" fill="#cfd6dc"/>
<text x="15.20" y="122.60" font-size="4.2" fill="#f4f6f8" text-anchor="middle">$</text>
<rect x="11.2" y="130.1" width="4.9" height="2.4" fill="none" stroke="#f4f6f8" stroke-width="0.9" stroke-linejoin="round" stroke-width="0.8"/>
<path d="M13.6,132.5 L13.6,134.4 M10.4,137.4 L10.4,135.6 Q10.4,134.4 11.6,134.4 L15.6,134.4 Q16.8,134.4 16.8,135.6 L16.8,137.4 M9,137.6 L11.8,137.6 M15.4,137.6 L18.2,137.6" fill="none" stroke="#f4f6f8" stroke-width="0.9" stroke-linejoin="round" stroke-width="0.8"/>
<path d="M9.3,143.9 L12.9,143.9 L11.6,147.6 L11.6,151.6 L10.6,149.5 L10.6,147.6 Z M13.6,143.9 L17.2,143.9 L15.9,147.6 L15.9,151.6 L14.9,149.5 L14.9,147.6 Z" fill="#f4f6f8"/>
<rect x="9.40" y="161.40" width="2.00" height="3.20" fill="#f4f6f8"/>
<rect x="12.30" y="159.00" width="2.30" height="5.60" fill="#f4f6f8"/>
<rect x="15.40" y="157.20" width="2.20" height="7.40" fill="#f4f6f8"/>
<rect x="29.80" y="543.10" width="941.20" height="0.90" fill="#f3f6f9"/>
<rect x="77.00" y="544.00" width="894.00" height="1.00" fill="#333d4a"/>
<rect x="0.00" y="544.00" width="77.00" height="1.00" fill="#3b4a7e"/>
</svg>
</body></html>
